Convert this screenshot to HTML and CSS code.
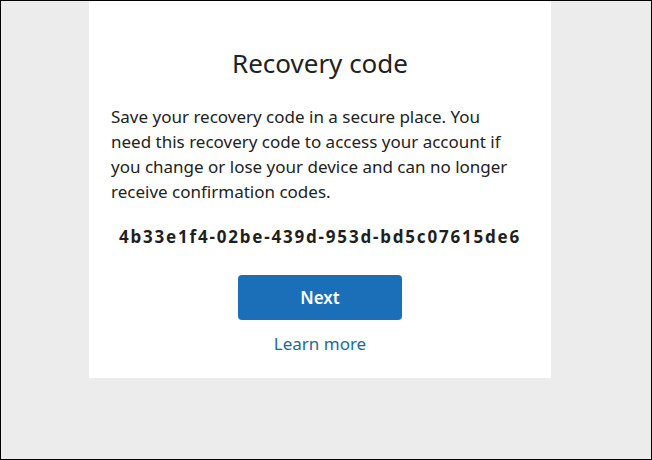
FILE: index.html
```html
<!DOCTYPE html>
<html>
<head>
<meta charset="utf-8">
<link rel="stylesheet" href="styles.css">
</head>
<body>
<div class="frame">
  <main class="card">
    <h1 class="title">Recovery code</h1>
    <p class="desc">Save your recovery code in a secure place. You need this recovery code to access your account if you change or lose your device and can no longer receive confirmation codes.</p>
    <div class="code">4b33e1f4-02be-439d-953d-bd5c07615de6</div>
    <button class="next">Next</button>
    <a class="learn" href="#">Learn more</a>
  </main>
</div>
</body>
</html>
```
FILE: styles.css
```css
* { box-sizing: border-box; }
html, body { margin: 0; padding: 0; }
body {
  width: 652px;
  height: 460px;
  background: #ececec;
  font-family: "Noto Sans", "Open Sans", sans-serif;
  color: #222;
}
.frame {
  width: 652px;
  height: 460px;
  border: 1px solid #000;
  padding-left: 88px;
}
.card {
  width: 462px;
  height: 377px;
  background: #fff;
  padding: 44px 22px 0 22px;
  display: flex;
  flex-direction: column;
  align-items: center;
}
.title {
  margin: 0;
  font-weight: 400;
  font-size: 26px;
  line-height: 36px;
  color: #222;
}
.desc {
  margin: 23px 0 0 0;
  font-size: 17px;
  line-height: 25px;
  align-self: flex-start;
  width: 402px;
}
.code {
  margin-top: 20px;
  font-weight: 700;
  font-size: 17px;
  line-height: 26px;
  letter-spacing: 1.8px;
  color: #1f1f1f;
}
.next {
  margin-top: 25px;
  width: 164px;
  height: 45px;
  background: #1a6fb8;
  color: #fff;
  border: none;
  border-radius: 4px;
  font-family: inherit;
  font-size: 17px;
  font-weight: 600;
}
.learn {
  margin-top: 12px;
  color: #1b6b99;
  text-decoration: none;
  font-size: 17px;
  line-height: 24px;
}
```
